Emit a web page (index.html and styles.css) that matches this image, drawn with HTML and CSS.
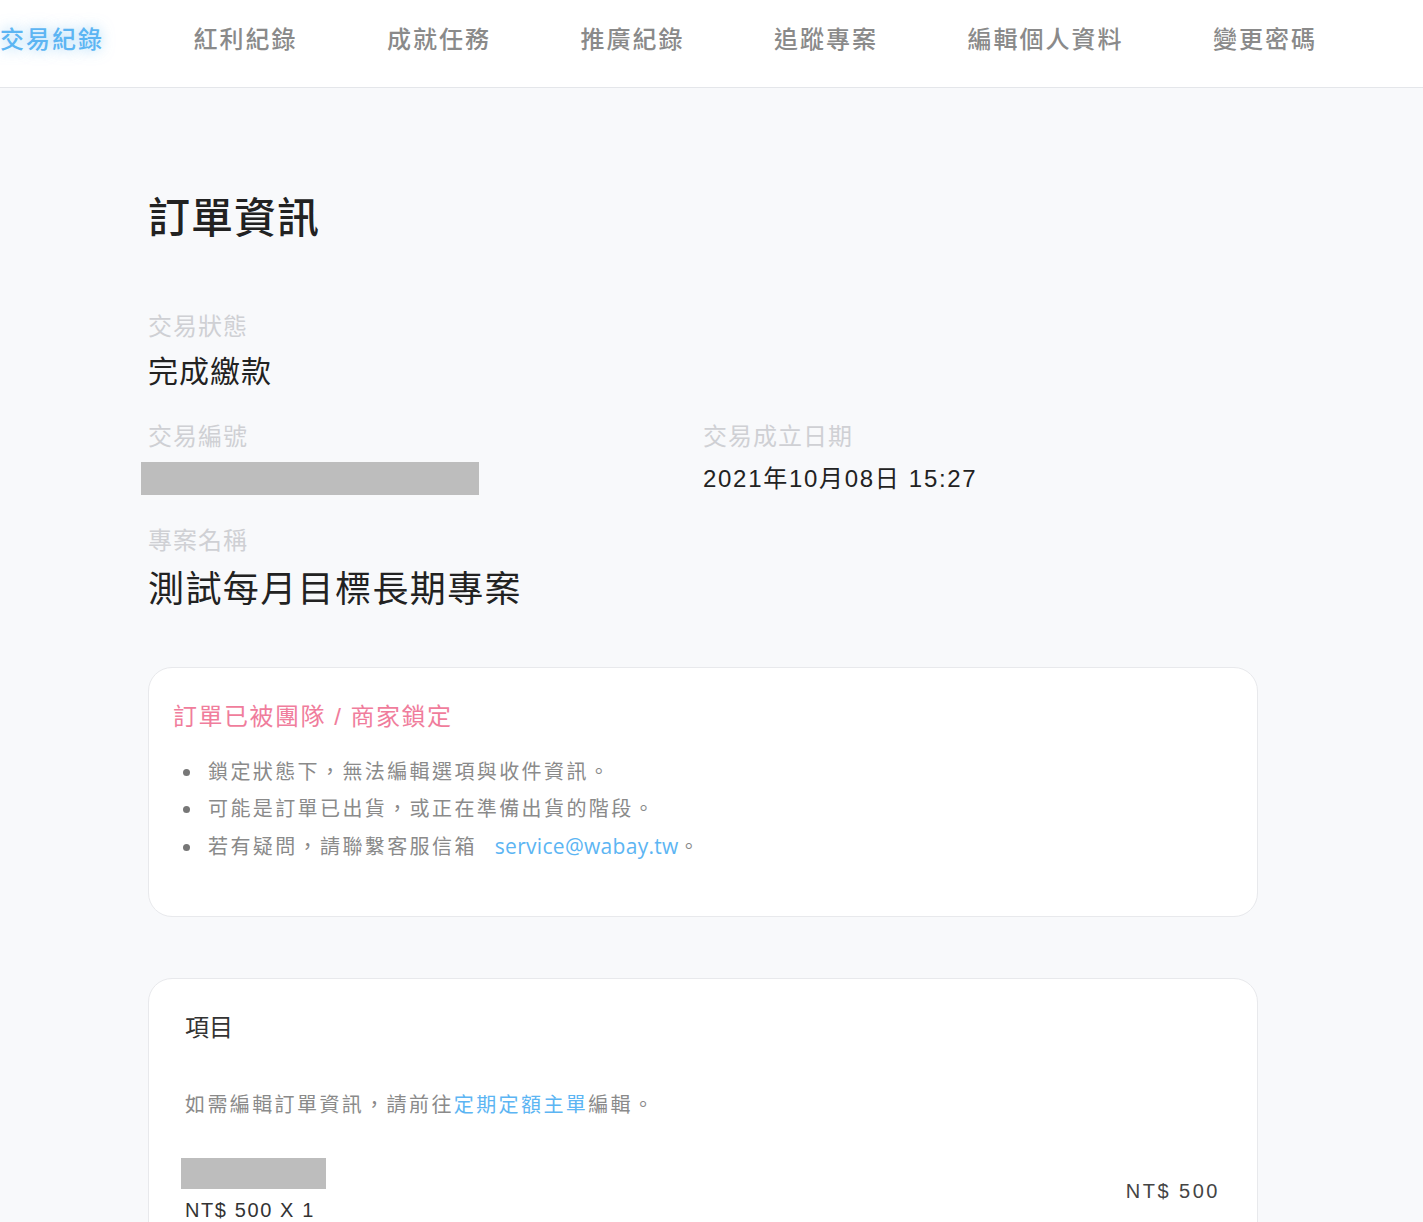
FILE: index.html
```html
<!DOCTYPE html>
<html lang="zh-Hant">
<head>
  <meta charset="UTF-8" />
  <meta name="viewport" content="width=device-width, initial-scale=1.0" />
  <title>訂單資訊</title>
  <link rel="stylesheet" href="styles.css">
</head>
<body>

  <nav class="tabs">
    <a class="tab active" href="#">交易紀錄</a>
    <a class="tab" href="#">紅利紀錄</a>
    <a class="tab" href="#">成就任務</a>
    <a class="tab" href="#">推廣紀錄</a>
    <a class="tab" href="#">追蹤專案</a>
    <a class="tab" href="#">編輯個人資料</a>
    <a class="tab" href="#">變更密碼</a>
  </nav>

  <main class="page">
    <h1 class="page-title">訂單資訊</h1>

    <div class="field">
      <div class="label">交易狀態</div>
      <div class="value status">完成繳款</div>
    </div>

    <div class="field-row">
      <div class="field">
        <div class="label">交易編號</div>
        <div class="redacted order-no"></div>
      </div>
      <div class="field">
        <div class="label">交易成立日期</div>
        <div class="value date">2021年10月08日 15:27</div>
      </div>
    </div>

    <div class="field">
      <div class="label">專案名稱</div>
      <div class="value project">測試每月目標長期專案</div>
    </div>

    <section class="card lock-card">
      <h2 class="lock-title">訂單已被團隊 / 商家鎖定</h2>
      <ul class="notes">
        <li><span>鎖定狀態下，無法編輯選項與收件資訊。</span></li>
        <li><span>可能是訂單已出貨，或正在準備出貨的階段。</span></li>
        <li><span>若有疑問，請聯繫客服信箱 <a class="mail" href="#">service@wabay.tw</a>。</span></li>
      </ul>
    </section>

    <section class="card items-card">
      <h2 class="items-title">項目</h2>
      <p class="hint">如需編輯訂單資訊，請前往<a href="#">定期定額主單</a>編輯。</p>
      <div class="item">
        <div class="item-info">
          <div class="redacted item-name"></div>
          <div class="item-qty">NT$ 500 X 1</div>
        </div>
        <div class="item-total">NT$ 500</div>
      </div>
    </section>
  </main>

</body>
</html>
```

FILE: styles.css
```css
* {
  box-sizing: border-box;
}
html, body {
  margin: 0;
  padding: 0;
  background: #f8f9fb;
  font-family: "Liberation Sans", "Noto Sans CJK TC", sans-serif;
  color: #222;
}
a {
  text-decoration: none;
}
.tabs {
  display: flex;
  gap: 89.5px;
  height: 88px;
  padding-top: 16px;
  background: #fff;
  border-bottom: 1px solid #e4e6ea;
}
.tab {
  font-size: 24px;
  line-height: 48px;
  letter-spacing: 2px;
  font-weight: 500;
  color: #8a8a8a;
}
.tab.active {
  color: #5cb5f3;
  text-shadow: 0 0 14px rgba(92, 181, 243, 0.6);
}
.page {
  width: 1110px;
  margin-left: 148px;
  padding-top: 106px;
}
.page-title {
  margin: 0 0 66px;
  font-size: 42px;
  line-height: 50px;
  letter-spacing: 1px;
  font-weight: 500;
  color: #222;
}
.field {
  margin-bottom: 28px;
}
.field-row {
  display: grid;
  grid-template-columns: 1fr 1fr;
}
.label {
  font-size: 24px;
  line-height: 34px;
  letter-spacing: 1px;
  color: #cfd0d4;
  margin-bottom: 8px;
}
.value {
  color: #222;
}
.status {
  font-size: 30px;
  line-height: 40px;
  letter-spacing: 1px;
}
.date {
  font-size: 24px;
  line-height: 34px;
  letter-spacing: 1.7px;
}
.project {
  font-size: 36px;
  line-height: 48px;
  letter-spacing: 1.4px;
}
.redacted {
  background: #bdbdbd;
}
.order-no {
  width: 338px;
  height: 33px;
  margin-left: -7px;
}
.card {
  background: #fff;
  border: 1px solid #e8e9ec;
  border-radius: 24px;
}
.lock-card {
  margin-top: 53px;
  padding: 32px 24px 50px;
}
.lock-title {
  margin: 0 0 20px;
  font-size: 24px;
  line-height: 34px;
  letter-spacing: 1.5px;
  font-weight: 400;
  color: #f07d9c;
}
.notes {
  list-style: none;
  margin: 0;
  padding: 0;
}
.notes li {
  display: flex;
  align-items: center;
  gap: 18px;
  padding-left: 10px;
  font-size: 20px;
  line-height: 37px;
  letter-spacing: 2.4px;
  color: #8a8a8a;
}
.notes li::before {
  content: "";
  flex: none;
  width: 7px;
  height: 7px;
  border-radius: 50%;
  background: #777;
}
.mail {
  margin-left: 10px;
  font-family: "Open Sans", sans-serif;
  font-size: 21px;
  letter-spacing: 0.3px;
  color: #5cb5f3;
}
.items-card {
  margin-top: 61px;
  padding: 32px 37px 40px 36px;
}
.items-title {
  margin: 0 0 42px;
  font-size: 24px;
  line-height: 34px;
  font-weight: 400;
  color: #333;
}
.hint {
  margin: 0 0 34px;
  font-size: 20px;
  line-height: 37px;
  letter-spacing: 2.4px;
  color: #8a8a8a;
}
.hint a {
  color: #5cb5f3;
}
.item {
  display: flex;
  justify-content: space-between;
  align-items: center;
}
.item-name {
  width: 145px;
  height: 31px;
  margin-left: -4px;
  margin-bottom: 7px;
}
.item-qty {
  font-size: 20px;
  line-height: 28px;
  letter-spacing: 1.6px;
  color: #333;
}
.item-total {
  font-size: 20px;
  line-height: 28px;
  letter-spacing: 2.5px;
  color: #444;
}
```
